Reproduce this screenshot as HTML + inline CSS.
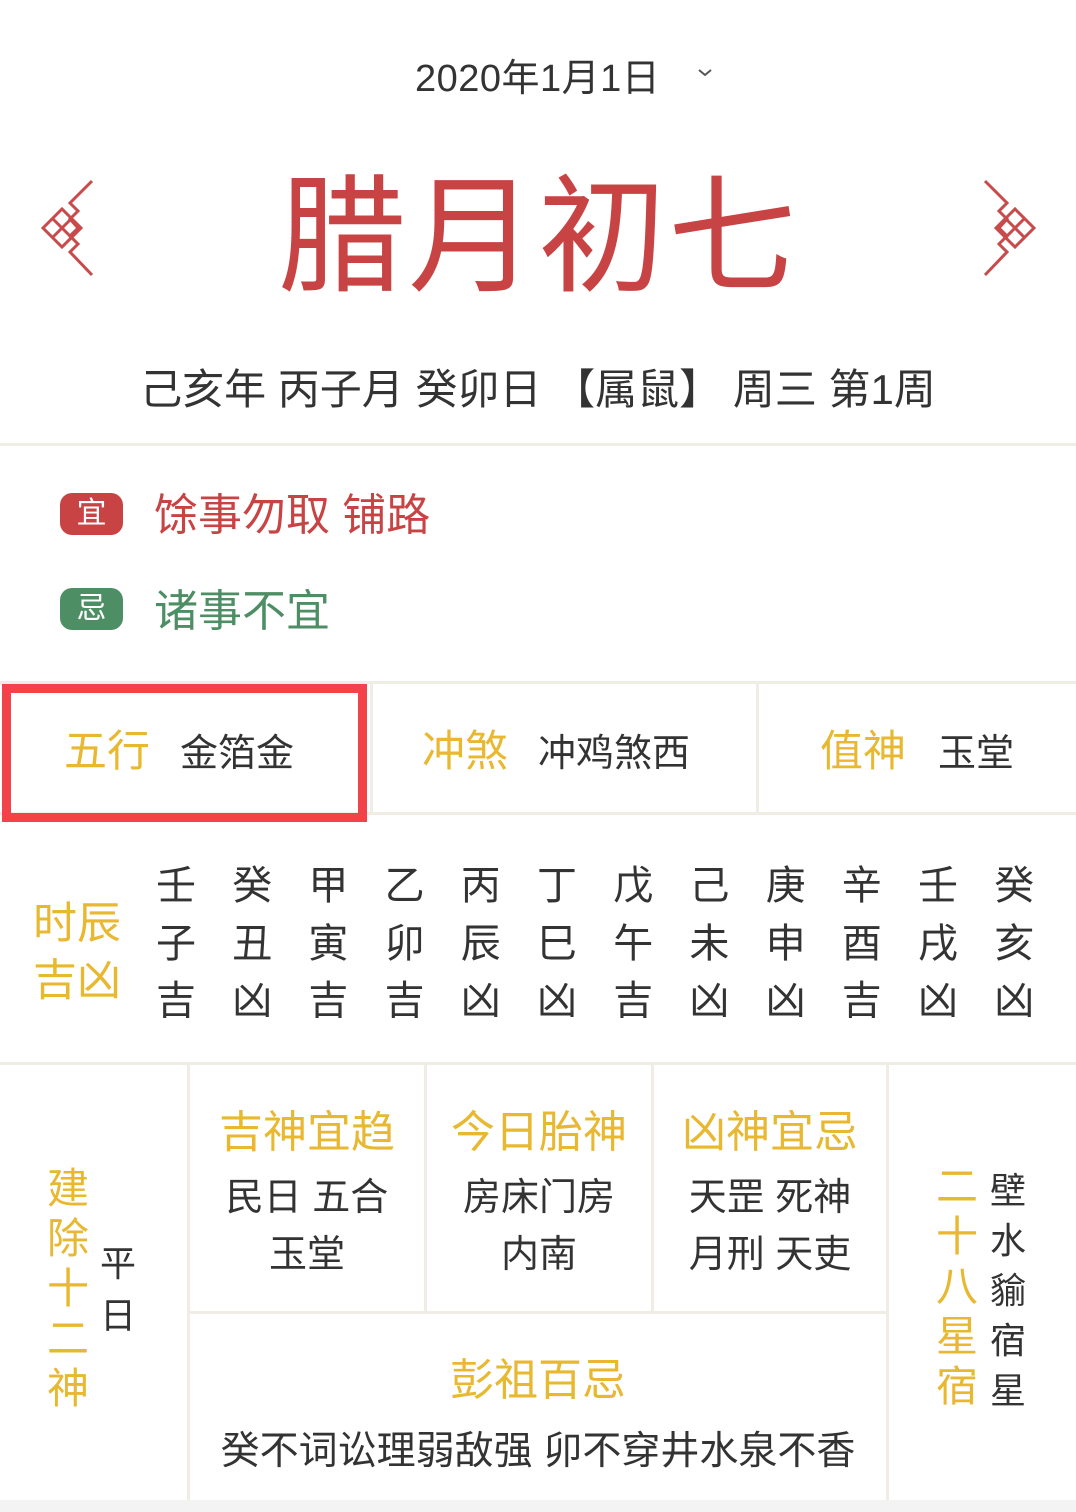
<!DOCTYPE html>
<html><head><meta charset="utf-8">
<style>
*{margin:0;padding:0;box-sizing:border-box}
body{width:1076px;height:1512px;background:#fff;position:relative;overflow:hidden;font-family:"Liberation Sans","Noto Sans CJK SC",sans-serif;color:#333}
.a{position:absolute;white-space:nowrap;line-height:1}
.h{position:absolute;background:#f0ede6}
.g{color:#e8b830}
.c{text-align:center}
</style></head><body>
<div class="a" style="left:415px;top:60px;font-size:38px;color:#333;letter-spacing:0.5px">2020年1月1日</div>
<svg class="a" style="left:696px;top:66px" width="18" height="12" fill="none" stroke="#555" stroke-width="2"><polyline points="3,4 9,9 15,4"/></svg>
<svg class="a" style="left:0;top:0" width="1076" height="320" fill="none" stroke="#c84a4a" stroke-width="3">
<g id="L">
<polyline points="92,181 70,203 78,211 70,219 78,228 70,236 78,244 70,252 92,275"/>
<polygon points="43,228 62,209 81,228 62,247"/>
<line x1="52.5" y1="218.5" x2="71.5" y2="237.5"/>
<line x1="71.5" y1="218.5" x2="52.5" y2="237.5"/>
</g>
<use href="#L" transform="translate(1077,0) scale(-1,1)"/>
</svg>
<div class="a" style="left:0;width:1076px;top:174px;font-size:128px;text-align:center;color:#c84444;letter-spacing:2px">腊月初七</div>
<div class="a" style="left:0;width:1076px;top:369px;font-size:42px;text-align:center;color:#333">己亥年 丙子月 癸卯日 【属鼠】 周三 第1周</div>
<div class="h" style="left:0;top:443px;width:1076px;height:3px"></div>

<div class="a" style="left:60px;top:493px;width:63px;height:42px;background:#c84444;border-radius:12px;color:#fff;font-size:30px;text-align:center;line-height:42px">宜</div>
<div class="a" style="left:154px;top:494px;font-size:44px;color:#c84444">馀事勿取 铺路</div>
<div class="a" style="left:60px;top:588px;width:63px;height:42px;background:#4e8e64;border-radius:12px;color:#fff;font-size:30px;text-align:center;line-height:42px">忌</div>
<div class="a" style="left:154px;top:590px;font-size:44px;color:#4e8e64">诸事不宜</div>

<div class="h" style="left:0;top:681px;width:1076px;height:3px"></div>
<div class="h" style="left:370px;top:684px;width:3px;height:128px"></div>
<div class="h" style="left:756px;top:684px;width:3px;height:128px"></div>
<div class="h" style="left:0;top:812px;width:1076px;height:3px"></div>
<div class="a" style="left:2px;top:684px;width:365px;height:138px;border:9px solid #f2434a"></div>
<div class="a g" style="left:64px;top:731px;font-size:43px">五行</div>
<div class="a" style="left:180px;top:735px;font-size:38px">金箔金</div>
<div class="a g" style="left:422px;top:731px;font-size:43px">冲煞</div>
<div class="a" style="left:538px;top:735px;font-size:38px">冲鸡煞西</div>
<div class="a g" style="left:820px;top:731px;font-size:43px">值神</div>
<div class="a" style="left:938px;top:735px;font-size:38px">玉堂</div>

<div class="a g" style="left:33px;top:895px;font-size:44px;line-height:57px;white-space:normal;width:95px">时辰<br>吉凶</div>
<div id="hrs"></div>
<script>
var t=["壬癸甲乙丙丁戊己庚辛壬癸","子丑寅卯辰巳午未申酉戌亥","吉凶吉吉凶凶吉凶凶吉凶凶"],h="";
for(var r=0;r<3;r++)for(var i=0;i<12;i++)h+='<div class="a c" style="left:'+(176+i*76.2-25)+'px;width:50px;top:'+(866+r*57.5)+'px;font-size:40px">'+t[r][i]+'</div>';
document.getElementById('hrs').innerHTML=h;
</script>

<div class="h" style="left:0;top:1062px;width:1076px;height:3px"></div>
<div class="h" style="left:187px;top:1065px;width:3px;height:435px"></div>
<div class="h" style="left:424px;top:1065px;width:3px;height:247px"></div>
<div class="h" style="left:651px;top:1065px;width:3px;height:247px"></div>
<div class="h" style="left:886px;top:1065px;width:3px;height:435px"></div>
<div class="h" style="left:190px;top:1311px;width:696px;height:3px"></div>
<div style="position:absolute;left:0;top:1500px;width:1076px;height:12px;background:#f3f3f3"></div>

<div class="a g c" style="left:45px;width:46px;top:1164px;font-size:42px;line-height:50px;white-space:normal">建<br>除<br>十<br>二<br>神</div>
<div class="a c" style="left:98px;width:40px;top:1238px;font-size:36px;line-height:52px;white-space:normal">平<br>日</div>

<div class="a g c" style="left:190px;width:234px;top:1111px;font-size:44px">吉神宜趋</div>
<div class="a c" style="left:190px;width:234px;top:1170px;font-size:38px;line-height:57px;white-space:normal">民日 五合<br>玉堂</div>
<div class="a g c" style="left:427px;width:224px;top:1111px;font-size:44px">今日胎神</div>
<div class="a c" style="left:427px;width:224px;top:1170px;font-size:38px;line-height:57px;white-space:normal">房床门房<br>内南</div>
<div class="a g c" style="left:654px;width:232px;top:1111px;font-size:44px">凶神宜忌</div>
<div class="a c" style="left:654px;width:232px;top:1170px;font-size:38px;line-height:57px;white-space:normal">天罡 死神<br>月刑 天吏</div>

<div class="a g c" style="left:190px;width:696px;top:1359px;font-size:44px">彭祖百忌</div>
<div class="a c" style="left:190px;width:696px;top:1432px;font-size:39px">癸不词讼理弱敌强 卯不穿井水泉不香</div>

<div class="a g c" style="left:934px;width:46px;top:1162px;font-size:42px;line-height:50px;white-space:normal">二<br>十<br>八<br>星<br>宿</div>
<div class="a c" style="left:988px;width:40px;top:1166px;font-size:36px;line-height:50px;white-space:normal">壁<br>水<br>貐<br>宿<br>星</div>
</body></html>
